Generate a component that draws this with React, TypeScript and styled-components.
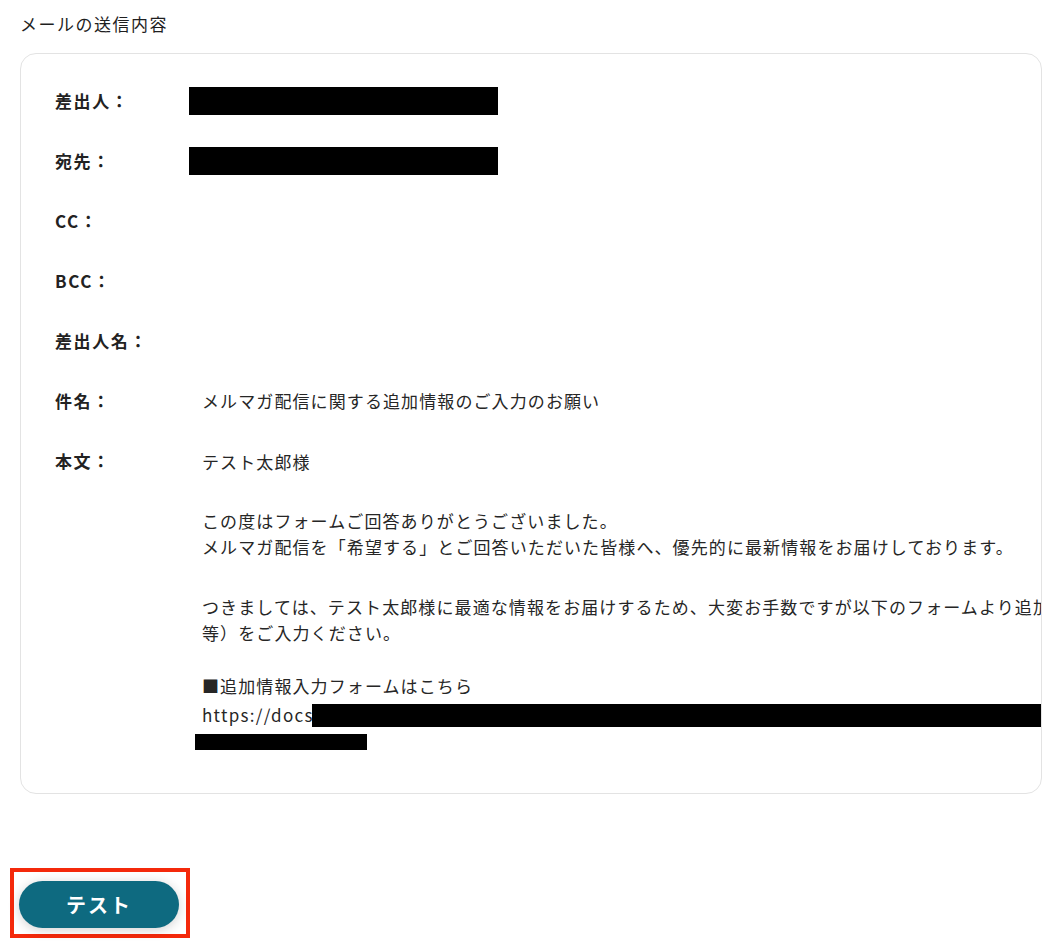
import React from "react";
import styled, { createGlobalStyle } from "styled-components";

const GlobalStyle = createGlobalStyle`
  body {
    margin: 0;
    background: #ffffff;
    font-family: "Noto Sans CJK JP", "Noto Sans", sans-serif;
    color: #222222;
  }
`;

const Page = styled.div`
  width: 1060px;
  height: 942px;
  padding: 12px 0 0 20px;
  box-sizing: border-box;
  overflow: hidden;
`;

const Title = styled.h2`
  margin: 0;
  font-size: 17px;
  font-weight: 400;
  line-height: 24px;
  letter-spacing: 1.5px;
  color: #1f1f1f;
`;

const Card = styled.div`
  margin-top: 17px;
  width: 1022px;
  box-sizing: border-box;
  border: 1px solid #e3e3e3;
  border-radius: 16px;
  padding: 35px 0 43px 34px;
  overflow: hidden;

  display: grid;
  grid-template-columns: 147px 1fr;
  grid-auto-rows: minmax(24px, auto);
  row-gap: 36px;
`;

const Label = styled.div`
  font-size: 17px;
  font-weight: 700;
  line-height: 24px;
  letter-spacing: 1.6px;
  color: #222222;
  height: 24px;
`;

const Value = styled.div`
  font-size: 17px;
  line-height: 24px;
  letter-spacing: 1.1px;
  color: #262626;
  white-space: nowrap;
  min-width: 0;
`;

const Redacted = styled.div`
  width: 309px;
  height: 28px;
  margin: -2px 0 -2px -13px;
  background: #000000;
`;

const Para = styled.p<{ $gap?: number }>`
  margin: ${(p) => p.$gap ?? 0}px 0 0 0;
  line-height: 26px;
`;

const UrlLine = styled.div`
  display: flex;
  align-items: center;
  margin-top: 3px;
  height: 26px;
  letter-spacing: 1.3px;
`;

const UrlBlock = styled.span`
  display: inline-block;
  flex: none;
  width: 740px;
  height: 23px;
  background: #000000;
  margin-left: -2px;
`;

const TailBlock = styled.div`
  width: 172px;
  height: 16px;
  margin: 6px 0 0 -7px;
  background: #000000;
`;

const Footer = styled.div`
  margin-top: 74px;
  margin-left: -10px;
  display: inline-block;
  border: 4px solid #f4290b;
  padding: 9px 7px 6px 5px;
`;

const TestButton = styled.button`
  display: block;
  width: 160px;
  height: 47px;
  border: none;
  border-radius: 24px;
  background: #0e6a80;
  color: #ffffff;
  font-family: "Noto Sans CJK JP", sans-serif;
  font-size: 20px;
  font-weight: 700;
  letter-spacing: 2px;
  box-shadow: 0 2px 12px rgba(0, 0, 0, 0.18);
  cursor: pointer;
`;

export default function App() {
  return (
    <>
      <GlobalStyle />
      <Page>
        <Title>メールの送信内容</Title>
        <Card>
          <Label>差出人：</Label>
          <Value>
            <Redacted />
          </Value>
          <Label>宛先：</Label>
          <Value>
            <Redacted />
          </Value>
          <Label>CC：</Label>
          <Value />
          <Label>BCC：</Label>
          <Value />
          <Label>差出人名：</Label>
          <Value />
          <Label>件名：</Label>
          <Value>メルマガ配信に関する追加情報のご入力のお願い</Value>
          <Label>本文：</Label>
          <Value>
            <Para>テスト太郎様</Para>
            <Para $gap={33}>この度はフォームご回答ありがとうございました。</Para>
            <Para>
              メルマガ配信を「希望する」とご回答いただいた皆様へ、優先的に最新情報をお届けしております。
            </Para>
            <Para $gap={34}>
              つきましては、テスト太郎様に最適な情報をお届けするため、大変お手数ですが以下のフォームより追加の情報（ご興味のある分野
            </Para>
            <Para>等）をご入力ください。</Para>
            <Para $gap={27}>■追加情報入力フォームはこちら</Para>
            <UrlLine>
              https://docs
              <UrlBlock />
            </UrlLine>
            <TailBlock />
          </Value>
        </Card>
        <Footer>
          <TestButton>テスト</TestButton>
        </Footer>
      </Page>
    </>
  );
}
